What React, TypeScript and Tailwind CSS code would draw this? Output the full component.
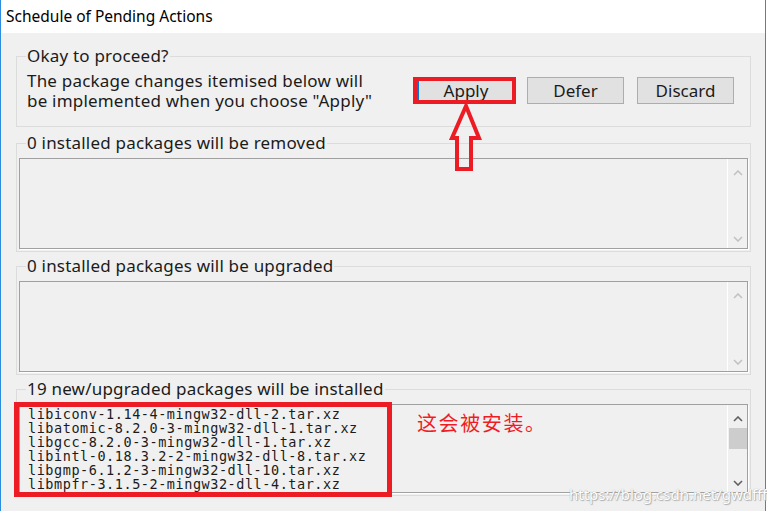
import type { ReactNode } from 'react';

const packages = [
  'libiconv-1.14-4-mingw32-dll-2.tar.xz',
  'libatomic-8.2.0-3-mingw32-dll-1.tar.xz',
  'libgcc-8.2.0-3-mingw32-dll-1.tar.xz',
  'libintl-0.18.3.2-2-mingw32-dll-8.tar.xz',
  'libgmp-6.1.2-3-mingw32-dll-10.tar.xz',
  'libmpfr-3.1.5-2-mingw32-dll-4.tar.xz',
];

// Windows-Groupbox mit Titel im Rahmen
function GroupBox({
  label,
  className,
  children,
}: {
  label: string;
  className?: string;
  children: ReactNode;
}) {
  return (
    <fieldset
      className={`ml-[15px] w-[735px] border border-[#dcdcdc] ${className ?? ''}`}
    >
      <legend className="ml-[9px] px-[1px] text-[17px] leading-[20px] tracking-[0.2px] text-[#1b1b1b]">
        {label}
      </legend>
      {children}
    </fieldset>
  );
}

function Chevron({ up, active }: { up?: boolean; active?: boolean }) {
  return (
    <svg width="10" height="6" viewBox="0 0 10 6">
      <polyline
        points={up ? '1,5 5,1 9,5' : '1,1 5,5 9,1'}
        fill="none"
        stroke={active ? '#606060' : '#c2c2c2'}
        strokeWidth="1.6"
      />
    </svg>
  );
}

function ListBox({
  active,
  className,
  children,
}: {
  active?: boolean;
  className?: string;
  children?: ReactNode;
}) {
  return (
    <div
      className={`mx-[2px] flex border border-[#a0a0a0] bg-[#f0f0f0] shadow-[1px_1px_0_#ffffff] ${className ?? ''}`}
    >
      <div className="flex-1 overflow-hidden">{children}</div>
      {/* Scrollbar */}
      <div className="flex w-[20px] flex-col items-center border-l border-white bg-[#f0f0f0] pt-[11px] pb-[6px]">
        <Chevron up active={active} />
        {active && <div className="mt-[6px] h-[21px] w-[18px] bg-[#cdcdcd]" />}
        <div className="flex-1" />
        <Chevron active={active} />
      </div>
    </div>
  );
}

export default function App() {
  return (
    <div className="relative h-[511px] w-[767px] overflow-hidden bg-white font-['Noto_Sans',sans-serif]">
      <div className="h-full w-[766px] border-x border-[#2b8ce0] bg-[#f0f0f0]">
        {/* Titelleiste */}
        <div className="flex h-[33px] items-center bg-white pl-[5px] text-[15.5px] text-black">
          Schedule of Pending Actions
        </div>

        <GroupBox label="Okay to proceed?" className="mt-[13px] pb-[15px]">
          <div className="flex items-start">
            <div className="mt-[5px] ml-[10px] text-[17px] leading-[20px] tracking-[0.2px] text-[#1b1b1b]">
              <div>The package changes itemised below will</div>
              <div>be implemented when you choose "Apply"</div>
            </div>
            <div className="mt-[11px] ml-auto mr-[16px] flex gap-[13px] text-[17px] text-[#1b1b1b]">
              <div className="relative">
                <button className="h-[27px] w-[97px] border border-[#adadad] border-l-2 border-l-[#0078d7] bg-[#e1e1e1]">
                  Apply
                </button>
                <span className="absolute -left-[4px] -right-[2px] top-0 bottom-0 border-4 border-[#ed1c24]" />
              </div>
              <button className="h-[27px] w-[97px] border border-[#adadad] bg-[#e1e1e1]">
                Defer
              </button>
              <button className="h-[27px] w-[97px] border border-[#adadad] bg-[#e1e1e1]">
                Discard
              </button>
            </div>
          </div>
        </GroupBox>

        <GroupBox label="0 installed packages will be removed" className="mt-[6px] pb-[2px]">
          <ListBox className="mt-[5px] h-[91px]" />
        </GroupBox>

        <GroupBox label="0 installed packages will be upgraded" className="mt-[4px] pb-[2px]">
          <ListBox className="mt-[5px] h-[91px]" />
        </GroupBox>

        <GroupBox label="19 new/upgraded packages will be installed" className="mt-[4px] pb-[2px]">
          <ListBox active className="mt-[5px] h-[89px]">
            <div className="pt-[2px] pl-[8px] font-['DejaVu_Sans_Mono',monospace] text-[13.5px] leading-[14px] tracking-[0.55px] text-[#1b1b1b]">
              {packages.map((p) => (
                <div key={p}>{p}</div>
              ))}
            </div>
          </ListBox>
        </GroupBox>
      </div>

      {/* Markierungen */}
      <svg
        className="absolute left-[448px] top-[101px]"
        width="36"
        height="74"
        viewBox="448 101 36 74"
      >
        <polygon
          points="466,106 452,138 457,138 457,169 471,169 471,138 479,138"
          fill="none"
          stroke="#ed1c24"
          strokeWidth="4"
          strokeLinejoin="miter"
        />
      </svg>
      <div className="absolute left-[14px] top-[402px] h-[95px] w-[378px] border-[5px] border-[#ed1c24]" />
      <div className="absolute left-[417px] top-[409px] font-['Noto_Sans_CJK_SC',sans-serif] text-[20px] leading-[28px] tracking-[1.6px] text-[#f01c24]">
        这会被安装。
      </div>
      <div className="absolute left-[569px] top-[483px] text-[15px] text-white [text-shadow:0_0_1px_#9a9a9a,1px_1px_1px_#b0b0b0]">
        https://blog.csdn.net/gwdfff
      </div>
    </div>
  );
}
